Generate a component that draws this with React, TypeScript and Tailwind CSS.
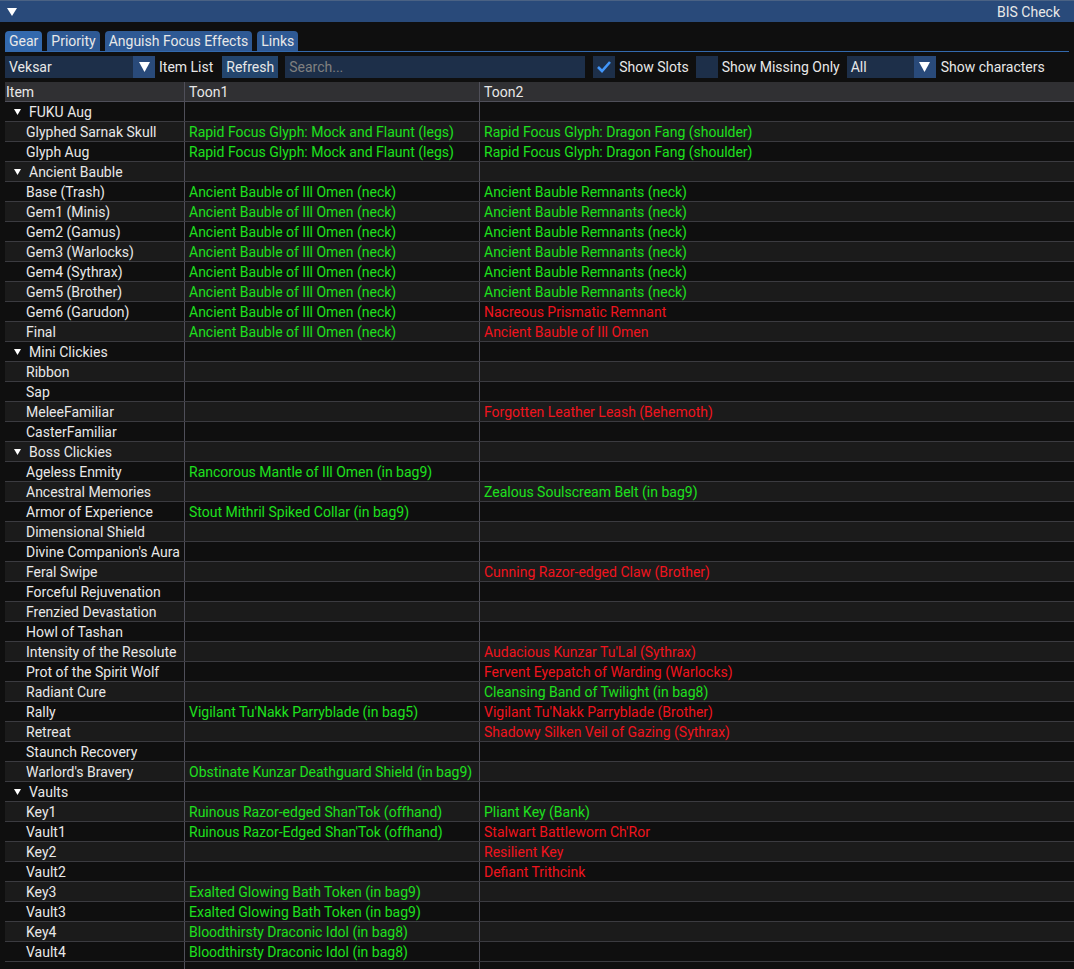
import React from "react";

type Cell = [string, "g" | "r"] | null;
type Row = { label: string; group?: boolean; a?: Cell; b?: Cell };

const G = (t: string): Cell => [t, "g"];
const R = (t: string): Cell => [t, "r"];

const ABIO = "Ancient Bauble of Ill Omen (neck)";
const ABR = "Ancient Bauble Remnants (neck)";

const rows: Row[] = [
  { label: "FUKU Aug", group: true },
  { label: "Glyphed Sarnak Skull", a: G("Rapid Focus Glyph: Mock and Flaunt (legs)"), b: G("Rapid Focus Glyph: Dragon Fang (shoulder)") },
  { label: "Glyph Aug", a: G("Rapid Focus Glyph: Mock and Flaunt (legs)"), b: G("Rapid Focus Glyph: Dragon Fang (shoulder)") },
  { label: "Ancient Bauble", group: true },
  { label: "Base (Trash)", a: G(ABIO), b: G(ABR) },
  { label: "Gem1 (Minis)", a: G(ABIO), b: G(ABR) },
  { label: "Gem2 (Gamus)", a: G(ABIO), b: G(ABR) },
  { label: "Gem3 (Warlocks)", a: G(ABIO), b: G(ABR) },
  { label: "Gem4 (Sythrax)", a: G(ABIO), b: G(ABR) },
  { label: "Gem5 (Brother)", a: G(ABIO), b: G(ABR) },
  { label: "Gem6 (Garudon)", a: G(ABIO), b: R("Nacreous Prismatic Remnant") },
  { label: "Final", a: G(ABIO), b: R("Ancient Bauble of Ill Omen") },
  { label: "Mini Clickies", group: true },
  { label: "Ribbon" },
  { label: "Sap" },
  { label: "MeleeFamiliar", b: R("Forgotten Leather Leash (Behemoth)") },
  { label: "CasterFamiliar" },
  { label: "Boss Clickies", group: true },
  { label: "Ageless Enmity", a: G("Rancorous Mantle of Ill Omen (in bag9)") },
  { label: "Ancestral Memories", b: G("Zealous Soulscream Belt (in bag9)") },
  { label: "Armor of Experience", a: G("Stout Mithril Spiked Collar (in bag9)") },
  { label: "Dimensional Shield" },
  { label: "Divine Companion's Aura" },
  { label: "Feral Swipe", b: R("Cunning Razor-edged Claw (Brother)") },
  { label: "Forceful Rejuvenation" },
  { label: "Frenzied Devastation" },
  { label: "Howl of Tashan" },
  { label: "Intensity of the Resolute", b: R("Audacious Kunzar Tu'Lal (Sythrax)") },
  { label: "Prot of the Spirit Wolf", b: R("Fervent Eyepatch of Warding (Warlocks)") },
  { label: "Radiant Cure", b: G("Cleansing Band of Twilight (in bag8)") },
  { label: "Rally", a: G("Vigilant Tu'Nakk Parryblade (in bag5)"), b: R("Vigilant Tu'Nakk Parryblade (Brother)") },
  { label: "Retreat", b: R("Shadowy Silken Veil of Gazing (Sythrax)") },
  { label: "Staunch Recovery" },
  { label: "Warlord's Bravery", a: G("Obstinate Kunzar Deathguard Shield (in bag9)") },
  { label: "Vaults", group: true },
  { label: "Key1", a: G("Ruinous Razor-edged Shan'Tok (offhand)"), b: G("Pliant Key (Bank)") },
  { label: "Vault1", a: G("Ruinous Razor-Edged Shan'Tok (offhand)"), b: R("Stalwart Battleworn Ch'Ror") },
  { label: "Key2", b: R("Resilient Key") },
  { label: "Vault2", b: R("Defiant Trithcink") },
  { label: "Key3", a: G("Exalted Glowing Bath Token (in bag9)") },
  { label: "Vault3", a: G("Exalted Glowing Bath Token (in bag9)") },
  { label: "Key4", a: G("Bloodthirsty Draconic Idol (in bag8)") },
  { label: "Vault4", a: G("Bloodthirsty Draconic Idol (in bag8)") },
];

function Tri({ w, h, className }: { w: number; h: number; className?: string }) {
  return (
    <svg width={w} height={h} viewBox={`0 0 ${w} ${h}`} className={className}>
      <polygon points={`0,0 ${w},0 ${w / 2},${h}`} fill="#ffffff" />
    </svg>
  );
}

function CellText({ c }: { c: Cell | undefined }) {
  if (!c) return null;
  return <span className={c[1] === "g" ? "text-[#1ee01e]" : "text-[#f0141e]"}>{c[0]}</span>;
}

function Combo({ text, w }: { text: string; w: number }) {
  return (
    <div className="flex h-[22px]" style={{ width: w }}>
      <div className="flex-1 bg-[#1d2f49] pl-[4px] flex items-center text-[#e8e8e8]">{text}</div>
      <div className="w-[22px] bg-[#294a7a] flex items-center justify-center">
        <Tri w={11} h={10} />
      </div>
    </div>
  );
}

function Check({ on }: { on: boolean }) {
  return (
    <div className="w-[22px] h-[22px] bg-[#1d2f49] flex items-center justify-center">
      {on && (
        <svg width="16" height="14" viewBox="0 0 16 14">
          <polyline points="2,7 6,11 14,2" fill="none" stroke="#4296fa" strokeWidth="2.6" />
        </svg>
      )}
    </div>
  );
}

export default function App() {
  return (
    <div
      className="w-[1074px] h-[969px] bg-[#0f0f0f] text-[#e8e8e8] text-[14px] leading-[16px] overflow-hidden"
      style={{ fontFamily: "Roboto, 'Liberation Sans', sans-serif" }}
    >
      {/* Title bar */}
      <div className="h-[22px] bg-[#294a7a] border-t border-[#4a6284] flex items-center justify-between pl-[7px] pr-[14px]">
        <Tri w={10} h={8} />
        <span>BIS Check</span>
      </div>

      {/* Tabs */}
      <div className="mt-[9px] px-[5px]">
        <div className="flex gap-[5px] border-b border-[#3369ad]">
          {["Gear", "Priority", "Anguish Focus Effects", "Links"].map((t, i) => (
            <div
              key={t}
              className={`h-[20px] px-[4px] rounded-t-[4px] flex items-center ${i === 0 ? "bg-[#3369ad]" : "bg-[#2e5994]"}`}
            >
              {t}
            </div>
          ))}
        </div>
      </div>

      {/* Toolbar */}
      <div className="mt-[4px] px-[5px] flex items-center h-[22px]">
        <Combo text="Veksar" w={150} />
        <span className="ml-[4px]">Item List</span>
        <div className="ml-[9px] h-[22px] px-[4px] bg-[#23456d] flex items-center">Refresh</div>
        <div className="ml-[7px] h-[22px] w-[300px] bg-[#1d2f49] pl-[4px] flex items-center text-[#808080]">Search...</div>
        <div className="ml-[8px]"><Check on /></div>
        <span className="ml-[4px]">Show Slots</span>
        <div className="ml-[7px]"><Check on={false} /></div>
        <span className="ml-[4px]">Show Missing Only</span>
        <div className="ml-[7px]"><Combo text="All" w={89} /></div>
        <span className="ml-[5px]">Show characters</span>
      </div>

      {/* Table */}
      <div className="mt-[4px] ml-[5px]">
        <div className="flex h-[20px] bg-[#303033] border-b border-[#4f4f59]">
          <div className="w-[180px] border-r border-[#4f4f59] pl-[1px] flex items-center">Item</div>
          <div className="w-[295px] border-r border-[#4f4f59] pl-[4px] flex items-center">Toon1</div>
          <div className="flex-1 pl-[4px] flex items-center">Toon2</div>
        </div>
        {rows.map((r, i) => (
          <div
            key={i}
            className={`flex h-[20px] border-b border-[#3b3b40] ${i % 2 === 1 ? "bg-[#1b1b1b]" : "bg-[#0f0f0f]"}`}
          >
            <div className="w-[180px] border-r border-[#4f4f59] flex items-center whitespace-nowrap overflow-hidden">
              {r.group ? (
                <>
                  <span className="ml-[9px] w-[15px] flex"><Tri w={7} h={6} /></span>
                  <span>{r.label}</span>
                </>
              ) : (
                <span className="ml-[21px]">{r.label}</span>
              )}
            </div>
            <div className="w-[295px] border-r border-[#4f4f59] pl-[4px] flex items-center whitespace-nowrap overflow-hidden">
              <CellText c={r.a} />
            </div>
            <div className="flex-1 pl-[4px] flex items-center whitespace-nowrap">
              <CellText c={r.b} />
            </div>
          </div>
        ))}
        <div className="flex h-[20px]">
          <div className="w-[180px] border-r border-[#4f4f59]" />
          <div className="w-[295px] border-r border-[#4f4f59]" />
        </div>
      </div>
    </div>
  );
}
